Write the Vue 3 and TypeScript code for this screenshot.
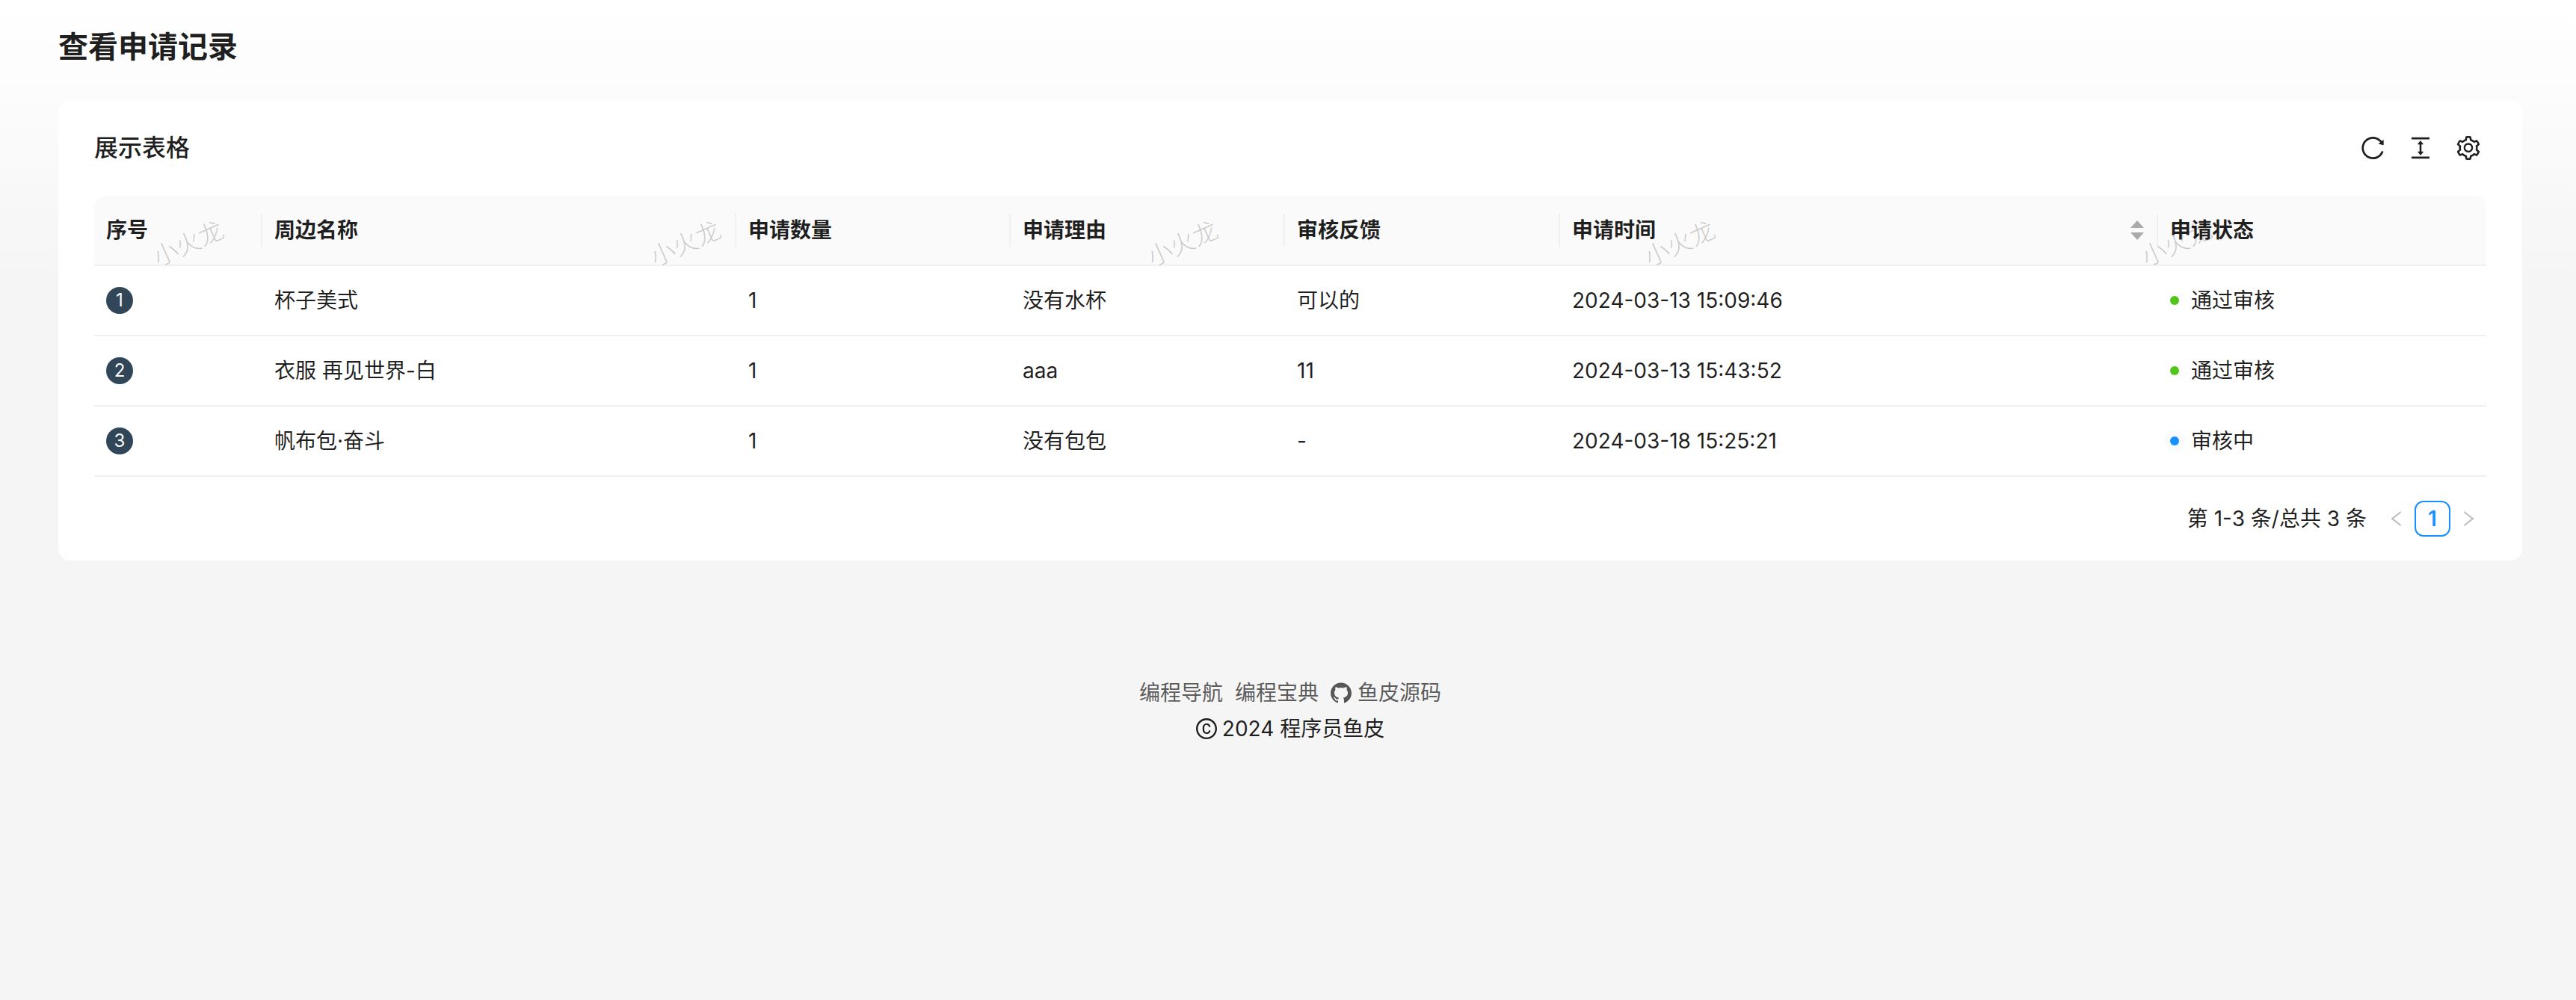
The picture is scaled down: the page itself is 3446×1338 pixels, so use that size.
<script setup lang="ts">
interface ApplyRecord {
  name: string
  count: number
  reason: string
  feedback: string
  time: string
  status: 'pass' | 'pending'
}

const records: ApplyRecord[] = [
  { name: '杯子美式', count: 1, reason: '没有水杯', feedback: '可以的', time: '2024-03-13 15:09:46', status: 'pass' },
  { name: '衣服 再见世界-白', count: 1, reason: 'aaa', feedback: '11', time: '2024-03-13 15:43:52', status: 'pass' },
  { name: '帆布包·奋斗', count: 1, reason: '没有包包', feedback: '-', time: '2024-03-18 15:25:21', status: 'pending' }
]

const statusText = { pass: '通过审核', pending: '审核中' }

// 水印间距固定 665px，第一枚的中心在表格内 126px 处
const watermarks = [0, 1, 2, 3, 4].map((i) => 126 + i * 665)
</script>

<template>
  <div class="page">
    <h1 class="page-title">查看申请记录</h1>

    <section class="card">
      <div class="toolbar">
        <div class="toolbar-title">展示表格</div>
        <div class="toolbar-icons">
          <svg class="tool-icon" viewBox="64 64 896 896" fill="currentColor">
            <path d="M909.1 209.3l-56.4 44.1C775.8 155.1 656.2 92 521.9 92 290 92 102.3 279.5 102 511.5 101.7 743.7 289.8 932 521.9 932c181.3 0 335.8-115 394.6-276.1 1.5-4.2-.7-8.9-4.9-10.3l-56.7-19.5a8 8 0 0 0-10.1 4.8c-1.8 5-3.8 10-5.9 14.9-17.3 41-42.1 77.8-73.7 109.4A344.77 344.77 0 0 1 655.9 829c-42.3 17.9-87.4 27-133.8 27-46.5 0-91.5-9.1-133.8-27A341.5 341.5 0 0 1 279 755.2a342.16 342.16 0 0 1-73.7-109.4c-17.9-42.4-27-87.4-27-133.9s9.1-91.5 27-133.9c17.3-41 42.1-77.8 73.7-109.4 31.6-31.6 68.4-56.4 109.3-73.8 42.3-17.9 87.4-27 133.8-27 46.5 0 91.5 9.1 133.8 27a341.5 341.5 0 0 1 109.3 73.8c9.9 9.9 19.2 20.4 27.8 31.4l-60.2 47a8 8 0 0 0 3 14.1l175.6 43c5 1.2 9.9-2.6 9.9-7.7l.8-180.9c-.1-6.6-7.8-10.3-13-6.2z" />
          </svg>
          <svg class="tool-icon" viewBox="64 64 896 896" fill="currentColor">
            <path d="M840 836H184c-4.4 0-8 3.6-8 8v60c0 4.4 3.6 8 8 8h656c4.4 0 8-3.6 8-8v-60c0-4.4-3.6-8-8-8zm0-724H184c-4.4 0-8 3.6-8 8v60c0 4.4 3.6 8 8 8h656c4.4 0 8-3.6 8-8v-60c0-4.4-3.6-8-8-8zM610.8 378c6 0 9.4-7 5.7-11.7L515.7 238.7a7.14 7.14 0 0 0-11.3 0L403.6 366.3a7.23 7.23 0 0 0 5.7 11.7H476v268h-62.8c-6 0-9.4 7-5.7 11.7l100.8 127.5c2.9 3.7 8.5 3.7 11.3 0l100.8-127.5c3.7-4.7.4-11.7-5.7-11.7H548V378h62.8z" />
          </svg>
          <svg class="tool-icon" viewBox="64 64 896 896" fill="currentColor">
            <path d="M924.8 625.7l-65.5-56c3.1-19 4.7-38.4 4.7-57.8s-1.6-38.8-4.7-57.8l65.5-56a32.03 32.03 0 0 0 9.3-35.2l-.9-2.6a443.74 443.74 0 0 0-79.7-137.9l-1.8-2.1a32.12 32.12 0 0 0-35.1-9.5l-81.3 28.9c-30-24.6-63.5-44-99.7-57.6l-15.7-85a32.05 32.05 0 0 0-25.8-25.7l-2.7-.5c-52.1-9.4-106.9-9.4-159 0l-2.7.5a32.05 32.05 0 0 0-25.8 25.7l-15.8 85.4a351.86 351.86 0 0 0-99 57.4l-81.9-29.1a32 32 0 0 0-35.1 9.5l-1.8 2.1a446.02 446.02 0 0 0-79.7 137.9l-.9 2.6c-4.5 12.5-.8 26.5 9.3 35.2l66.3 56.6c-3.1 18.8-4.6 38-4.6 57.1 0 19.2 1.5 38.4 4.6 57.1L99 625.5a32.03 32.03 0 0 0-9.3 35.2l.9 2.6c18.1 50.4 44.9 96.9 79.7 137.9l1.8 2.1a32.12 32.12 0 0 0 35.1 9.5l81.9-29.1c29.8 24.5 63.1 43.9 99 57.4l15.8 85.4a32.05 32.05 0 0 0 25.8 25.7l2.7.5a449.4 449.4 0 0 0 159 0l2.7-.5a32.05 32.05 0 0 0 25.8-25.7l15.7-85a350 350 0 0 0 99.7-57.6l81.3 28.9a32 32 0 0 0 35.1-9.5l1.8-2.1c34.8-41.1 61.6-87.5 79.7-137.9l.9-2.6c4.5-12.3.8-26.3-9.3-35zM788.3 465.9c2.5 15.1 3.8 30.6 3.8 46.1s-1.3 31-3.8 46.1l-6.6 40.1 74.7 63.9a370.03 370.03 0 0 1-42.6 73.6L721 702.8l-31.4 25.8c-23.9 19.6-50.5 35-79.3 45.8l-38.1 14.3-17.9 97a377.5 377.5 0 0 1-85 0l-17.9-97.2-37.8-14.5c-28.5-10.8-55-26.2-78.7-45.7l-31.4-25.9-93.4 33.2c-17-22.9-31.2-47.6-42.6-73.6l75.5-64.5-6.5-40c-2.4-14.9-3.7-30.3-3.7-45.5 0-15.3 1.2-30.6 3.7-45.5l6.5-40-75.5-64.5c11.3-26.1 25.6-50.7 42.6-73.6l93.4 33.2 31.4-25.9c23.7-19.5 50.2-34.9 78.7-45.7l37.9-14.3 17.9-97.2c28.1-3.2 56.8-3.2 85 0l17.9 97 38.1 14.3c28.7 10.8 55.4 26.2 79.3 45.8l31.4 25.8 92.8-32.9c17 22.9 31.2 47.7 42.6 73.6L781.8 426l6.5 39.9zM512 326c-97.2 0-176 78.8-176 176s78.8 176 176 176 176-78.8 176-176-78.8-176-176-176zm79.2 255.2A111.6 111.6 0 0 1 512 614c-29.9 0-58-11.7-79.2-32.8A111.6 111.6 0 0 1 400 502c0-29.9 11.7-58 32.8-79.2C454 401.6 482.1 390 512 390c29.9 0 58 11.6 79.2 32.8A111.6 111.6 0 0 1 624 502c0 29.9-11.7 58-32.8 79.2z" />
          </svg>
        </div>
      </div>

      <div class="table-wrap">
        <table class="table">
          <colgroup>
            <col style="width: 225px" />
            <col style="width: 634px" />
            <col style="width: 367px" />
            <col style="width: 367px" />
            <col style="width: 368px" />
            <col style="width: 800px" />
            <col />
          </colgroup>
          <thead>
            <tr>
              <th>序号</th>
              <th>周边名称</th>
              <th>申请数量</th>
              <th>申请理由</th>
              <th>审核反馈</th>
              <th>
                <div class="sort-cell">
                  <span>申请时间</span>
                  <svg class="sorter" viewBox="0 0 18 26" fill="#aaaaaa">
                    <path d="M9 0 18 10H0Z" />
                    <path d="M0 16H18L9 26Z" />
                  </svg>
                </div>
              </th>
              <th>申请状态</th>
            </tr>
          </thead>
          <tbody>
            <tr v-for="(row, index) in records" :key="row.time">
              <td><span class="index-badge">{{ index + 1 }}</span></td>
              <td>{{ row.name }}</td>
              <td>{{ row.count }}</td>
              <td>{{ row.reason }}</td>
              <td>{{ row.feedback }}</td>
              <td>{{ row.time }}</td>
              <td>
                <div class="status">
                  <i class="dot" :class="row.status"></i><span>{{ statusText[row.status] }}</span>
                </div>
              </td>
            </tr>
          </tbody>
        </table>

        <!-- 水印压在表头上，被下面的白色行盖住 -->
        <div class="watermark-layer">
          <span
            v-for="x in watermarks"
            :key="x"
            class="watermark"
            :style="{ left: x + 'px' }"
          >小火龙</span>
        </div>
      </div>

      <div class="pagination">
        <span class="total">第 1-3 条/总共 3 条</span>
        <span class="page-arrow">
          <svg viewBox="64 64 896 896" fill="currentColor">
            <path d="M724 218.3V141c0-6.7-7.7-10.4-12.9-6.3L260.3 486.8a31.86 31.86 0 0 0 0 50.3l450.8 352.1c5.3 4.1 12.9.4 12.9-6.3v-77.3c0-4.9-2.3-9.6-6.1-12.6l-360-281 360-281.1c3.8-3 6.1-7.7 6.1-12.6z" />
          </svg>
        </span>
        <span class="page-item">1</span>
        <span class="page-arrow">
          <svg viewBox="64 64 896 896" fill="currentColor">
            <path d="M765.7 486.8L314.9 134.7A7.97 7.97 0 0 0 302 141v77.3c0 4.9 2.3 9.6 6.1 12.6l360 281.1-360 281.1c-3.9 3-6.1 7.7-6.1 12.6V883c0 6.7 7.7 10.4 12.9 6.3l450.8-352.1a31.96 31.96 0 0 0 0-50.4z" />
          </svg>
        </span>
      </div>
    </section>

    <footer class="footer">
      <div class="footer-links">
        <span>编程导航</span>
        <span>编程宝典</span>
        <span class="github">
          <svg viewBox="64 64 896 896" fill="currentColor">
            <path d="M511.6 76.3C264.3 76.2 64 276.4 64 523.5 64 718.9 189.3 885 363.8 946c23.5 5.9 19.9-10.8 19.9-22.2v-77.5c-135.7 15.9-141.2-73.9-150.3-88.9C215 726 171.5 718 184.5 703c30.9-15.9 62.4 4 98.9 57.9 26.4 39.1 77.9 32.5 104 26 5.7-23.5 17.9-44.5 34.7-60.8-140.6-25.2-199.2-111-199.2-213 0-49.5 16.3-95 48.3-131.7-20.4-60.5 1.9-112.3 4.9-120 58.1-5.2 118.5 41.6 123.2 45.3 33-8.9 70.7-13.6 112.9-13.6 42.4 0 80.2 4.9 113.5 13.9 11.3-8.6 67.3-48.8 121.3-43.9 2.9 7.7 24.7 58.3 5.5 118 32.4 36.8 48.9 82.7 48.9 132.3 0 102.2-59 188.1-200 212.9a127.5 127.5 0 0 1 38.1 91v112.5c.8 9 0 17.9 15 17.9 177.1-59.7 304.6-227 304.6-424.1 0-247.2-200.4-447.3-447.5-447.3z" />
          </svg>
          <span>鱼皮源码</span>
        </span>
      </div>
      <div class="copyright">
        <svg viewBox="64 64 896 896" fill="currentColor">
          <path d="M512 64C264.6 64 64 264.6 64 512s200.6 448 448 448 448-200.6 448-448S759.4 64 512 64zm0 820c-205.4 0-372-166.6-372-372s166.6-372 372-372 372 166.6 372 372-166.6 372-372 372zm5.6-532.7c53 0 89 33.8 93 83.4.3 4.2 3.8 7.4 8 7.4h56.7c2.6 0 4.7-2.1 4.7-4.7 0-86.7-68.4-147.4-162.7-147.4C407.4 290 344 364.2 344 486v52.3C344 659.8 407.4 734 517.3 734c94 0 162.7-58.8 162.7-145 0-2.6-2.1-4.7-4.7-4.7h-56.8c-4.2 0-7.6 3.2-8 7.3-4.2 46.1-40.1 77.8-93 77.8-65.3 0-102.1-47.9-102.1-133.6v-52.6c.1-87 37-135.5 102.2-135.5z" />
        </svg>
        <span>2024 程序员鱼皮</span>
      </div>
    </footer>
  </div>
</template>

<style>
html,
body {
  margin: 0;
  background: #f5f5f5;
}
</style>

<style scoped>
.page {
  box-sizing: border-box;
  min-height: 100vh;
  padding: 0 72px 0 78px;
  background: linear-gradient(#ffffff, #f5f5f5 28%);
  font-family: Inter, "Noto Sans CJK SC", sans-serif;
  font-size: 28px;
  line-height: 44px;
  color: rgba(0, 0, 0, 0.88);
}

.page-title {
  margin: 0;
  padding: 35px 0 43px;
  font-size: 40px;
  line-height: 56px;
  font-weight: 600;
}

.card {
  padding: 32px 48px;
  background: #fff;
  border-radius: 16px;
}

.toolbar {
  display: flex;
  align-items: center;
  justify-content: space-between;
  height: 64px;
  margin-bottom: 32px;
}

.toolbar-title {
  font-size: 32px;
  font-weight: 500;
}

.toolbar-icons {
  display: flex;
  gap: 32px;
  margin-right: 8px;
}

.tool-icon {
  display: block;
  width: 32px;
  height: 32px;
}

.table-wrap {
  position: relative;
}

.table {
  width: 100%;
  table-layout: fixed;
  border-collapse: separate;
  border-spacing: 0;
}

th,
td {
  position: relative;
  box-sizing: border-box;
  height: 94px;
  padding: 0 16px;
  text-align: left;
  line-height: 44px;
  border-bottom: 2px solid #f0f0f0;
}

th {
  background: #fafafa;
  font-weight: 600;
}

th:first-child {
  border-top-left-radius: 16px;
}

th:last-child {
  border-top-right-radius: 16px;
}

/* 表头列之间的竖线 */
th:not(:last-child)::before {
  content: "";
  position: absolute;
  top: 24px;
  right: 0;
  width: 2px;
  height: 44px;
  background: #f0f0f0;
}

td {
  z-index: 2;
  background: #fff;
  font-weight: 400;
}

.sort-cell {
  display: flex;
  align-items: center;
  justify-content: space-between;
  padding-right: 3px;
}

.sorter {
  display: block;
  width: 18px;
  height: 26px;
}

.index-badge {
  display: block;
  width: 36px;
  height: 36px;
  border-radius: 50%;
  background: #314659;
  color: #fff;
  font-size: 24px;
  line-height: 36px;
  text-align: center;
}

.status {
  display: flex;
  align-items: center;
}

.dot {
  width: 12px;
  height: 12px;
  margin-right: 16px;
  border-radius: 50%;
}

.dot.pass {
  background: #52c41a;
}

.dot.pending {
  background: #1890ff;
  box-shadow: 0 0 0 8px rgba(24, 144, 255, 0.03);
}

.watermark-layer {
  position: absolute;
  top: 0;
  left: 0;
  z-index: 1;
  pointer-events: none;
}

.watermark {
  position: absolute;
  top: 64px;
  font-size: 33px;
  line-height: 1;
  font-weight: 300;
  color: rgba(0, 0, 0, 0.2);
  white-space: nowrap;
  transform: translate(-50%, -50%) rotate(-24deg);
}

.pagination {
  display: flex;
  align-items: center;
  justify-content: flex-end;
  height: 48px;
  margin-top: 32px;
}

.total {
  margin-right: 16px;
}

.page-arrow {
  display: flex;
  align-items: center;
  justify-content: center;
  width: 48px;
  height: 48px;
  color: rgba(0, 0, 0, 0.25);
}

.page-arrow svg {
  width: 24px;
  height: 24px;
}

.page-item {
  box-sizing: border-box;
  width: 48px;
  height: 48px;
  border: 2px solid #1890ff;
  border-radius: 12px;
  color: #1890ff;
  font-weight: 600;
  line-height: 44px;
  text-align: center;
}

.footer {
  padding-top: 153px;
  text-align: center;
}

.footer-links {
  display: flex;
  justify-content: center;
  gap: 16px;
  line-height: 48px;
  color: rgba(0, 0, 0, 0.65);
}

.github {
  display: inline-flex;
  align-items: center;
  gap: 8px;
}

.github svg,
.copyright svg {
  width: 28px;
  height: 28px;
}

.copyright {
  display: flex;
  align-items: center;
  justify-content: center;
  gap: 7px;
  line-height: 48px;
}
</style>
